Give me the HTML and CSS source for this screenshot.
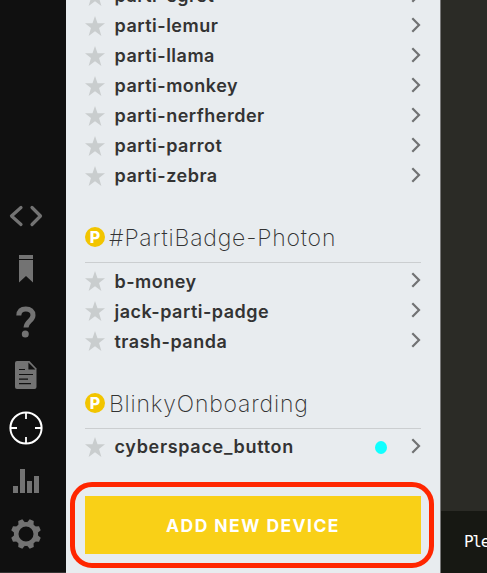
FILE: index.html
```html
<!DOCTYPE html>
<html lang="en">
<head>
<meta charset="utf-8">
<title>Devices</title>
<link rel="stylesheet" href="styles.css">
</head>
<body>
<svg class="defs" aria-hidden="true">
  <symbol id="star" viewBox="0 0 20 20"><path d="M10 0l2.500 7.300H20l-6 4.700 2.400 8L10 15.200 3.600 20 6 12 0 7.300h7.500z" fill="#c9cdce"/></symbol>
  <symbol id="arrow" viewBox="0 0 10 16"><path d="M1.300 1.300L8 8l-6.700 6.700" fill="none" stroke="#717273" stroke-width="2.200"/></symbol>
</svg>
<div class="app">
  <nav class="rail">
    <svg viewBox="0 0 34 22" width="34" height="22"><path d="M12 2.500L2.500 11l9.500 8.500M23 2.500l8.500 8.500-8.500 8.500" fill="none" stroke="#737373" stroke-width="3.200" stroke-linecap="round" stroke-linejoin="round"/></svg>
    <svg viewBox="0 0 16 30" width="16" height="30"><path d="M1 1h14v4H1zM1 6h14v22.500l-7-6.500-7 6.500z" fill="#737373"/></svg>
    <svg viewBox="0 0 20 32" width="20" height="32"><path d="M2.800 9.500C3 4.800 5.800 3 9.800 3c4.500 0 7.200 2.300 7.200 6.200 0 5.600-6.800 6-7 12.300" fill="none" stroke="#737373" stroke-width="5"/><circle cx="9.300" cy="28" r="3.500" fill="#737373"/></svg>
    <svg viewBox="0 0 22 28" width="22" height="28"><path d="M2 0h12.500l7 7.500V26q0 2-2 2H2q-2 0-2-2V2q0-2 2-2z" fill="#737373"/><path d="M14 3v5h5zM4 8.500h6M4 13.500h14M4 18.200h9M4 22.700h12" fill="#111" stroke="#111" stroke-width="1.200"/></svg>
    <svg viewBox="0 0 34 34" width="34" height="34"><circle cx="17" cy="17" r="15.600" fill="none" stroke="#fff" stroke-width="2"/><path d="M17 1v7M17 26v7M1 17h7M26 17h7" stroke="#fff" stroke-width="1.800"/></svg>
    <svg viewBox="0 0 26 24" width="26" height="24"><path d="M0 17h5v7H0zM7 0h5v24H7zM14 12h5v12h-5zM21 7h5v17h-5z" fill="#737373"/></svg>
    <svg viewBox="-15 -15 30 30" width="30" height="30"><circle r="9.800" fill="none" stroke="#737373" stroke-width="4.600"/><g fill="#737373"><path id="tooth" d="M-3.500-11L-2.200-15h4.400l1.300 4z" transform="rotate(22.500)"/><use href="#tooth" transform="rotate(45)"/><use href="#tooth" transform="rotate(90)"/><use href="#tooth" transform="rotate(135)"/><use href="#tooth" transform="rotate(180)"/><use href="#tooth" transform="rotate(225)"/><use href="#tooth" transform="rotate(270)"/><use href="#tooth" transform="rotate(315)"/></g></svg>
  </nav>
  <main class="panel">
    <ul class="devices">
      <li><svg class="star"><use href="#star"/></svg><span class="name">parti-egret</span><svg class="arrow"><use href="#arrow"/></svg></li>
      <li><svg class="star"><use href="#star"/></svg><span class="name">parti-lemur</span><svg class="arrow"><use href="#arrow"/></svg></li>
      <li><svg class="star"><use href="#star"/></svg><span class="name">parti-llama</span><svg class="arrow"><use href="#arrow"/></svg></li>
      <li><svg class="star"><use href="#star"/></svg><span class="name">parti-monkey</span><svg class="arrow"><use href="#arrow"/></svg></li>
      <li><svg class="star"><use href="#star"/></svg><span class="name">parti-nerfherder</span><svg class="arrow"><use href="#arrow"/></svg></li>
      <li><svg class="star"><use href="#star"/></svg><span class="name">parti-parrot</span><svg class="arrow"><use href="#arrow"/></svg></li>
      <li><svg class="star"><use href="#star"/></svg><span class="name">parti-zebra</span><svg class="arrow"><use href="#arrow"/></svg></li>
    </ul>
    <h2><span class="badge">P</span><span class="title">#PartiBadge-Photon</span></h2>
    <ul class="devices group">
      <li><svg class="star"><use href="#star"/></svg><span class="name">b-money</span><svg class="arrow"><use href="#arrow"/></svg></li>
      <li><svg class="star"><use href="#star"/></svg><span class="name">jack-parti-padge</span><svg class="arrow"><use href="#arrow"/></svg></li>
      <li><svg class="star"><use href="#star"/></svg><span class="name">trash-panda</span><svg class="arrow"><use href="#arrow"/></svg></li>
    </ul>
    <h2><span class="badge">P</span><span class="title">BlinkyOnboarding</span></h2>
    <ul class="devices">
      <li><svg class="star"><use href="#star"/></svg><span class="name wide">cyberspace_button</span><i class="online"></i><svg class="arrow"><use href="#arrow"/></svg></li>
    </ul>
    <div class="highlight"><button>ADD NEW DEVICE</button></div>
  </main>
  <section class="editor"><footer>Please</footer></section>
</div>
</body>
</html>
```
FILE: styles.css
```css
* { box-sizing: border-box; }
body { margin: 0; overflow: hidden; font-family: Inter, "Liberation Sans", sans-serif; }
.defs { position: absolute; width: 0; height: 0; }
.app { display: flex; width: 487px; height: 573px; overflow: hidden; }
.rail {
  flex: none; width: 66px; background: #101010; border-bottom: 1px solid #333;
  display: grid; grid-auto-rows: 53px; justify-items: center; align-items: center;
  padding: 189px 14px 0 0;
}
.panel { flex: none; width: 374px; height: 573px; background: #e8ecef; padding: 0 19px; overflow: hidden; }
.devices { list-style: none; margin: 0; padding: 0; }
.devices:first-child { margin-top: -19px; }
.devices li { display: flex; align-items: center; height: 30px; }
.star { width: 20px; height: 20px; margin-right: 9.5px; }
.arrow { width: 10px; height: 16px; margin-top: -3px; }
.name { flex: 1; font-size: 18px; line-height: 24px; font-weight: 600; color: #333; letter-spacing: .5px; white-space: nowrap; }
.group .name { padding-top: 1px; }
.name.wide { letter-spacing: .68px; }
h2 {
  display: flex; align-items: center; gap: 4px; height: 48px; margin: 24px 0 3px; padding-bottom: 1px;
  border-bottom: 1px solid #cbced0; font-size: 23px; font-weight: 250; color: #333;
}
.group + h2 { margin-top: 25px; }
.title { letter-spacing: .8px; }
.badge {
  width: 20px; height: 20px; border-radius: 50%; background: #f2c500; color: #fff;
  font-size: 16px; font-weight: 800; line-height: 20px; text-align: center; margin-top: -3px;
}
.online { width: 12px; height: 13px; border-radius: 50%; background: #1ff; margin-right: 24px; }
.highlight { margin: 20px -13px 0 -15px; height: 86px; border: 5px solid #ff2600; border-radius: 22px; padding: 9px 8px 9px 10px; }
button { display: block; width: 100%; height: 58px; padding: 1px 0 0; border: 0; background: #f9d017; color: #fff; font: 700 17.5px Inter, sans-serif; letter-spacing: 1.45px; }
.editor { flex: 1; background: #2b2b26; border-left: 1px solid #777; display: flex; flex-direction: column; justify-content: flex-end; overflow: hidden; }
footer { height: 62px; background: #171813; color: #fff; padding-left: 23px; font: 16px/61px "DejaVu Sans Mono", monospace; letter-spacing: -1.3px; }
```
